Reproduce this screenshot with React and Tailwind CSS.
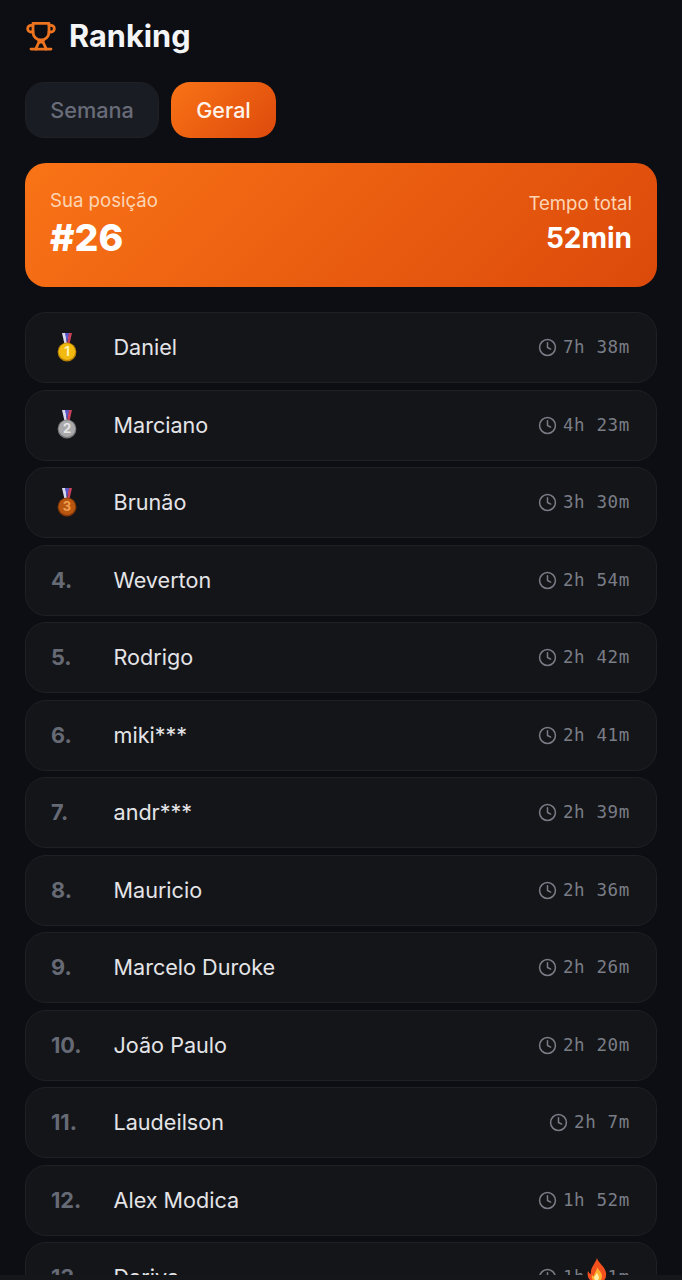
import React from 'react';
import { Clock } from 'lucide-react';

const rows = [
  { name: 'Daniel', time: '7h 38m', medal: 'gold' },
  { name: 'Marciano', time: '4h 23m', medal: 'silver' },
  { name: 'Brunão', time: '3h 30m', medal: 'bronze' },
  { name: 'Weverton', time: '2h 54m' },
  { name: 'Rodrigo', time: '2h 42m' },
  { name: 'miki***', time: '2h 41m' },
  { name: 'andr***', time: '2h 39m' },
  { name: 'Mauricio', time: '2h 36m' },
  { name: 'Marcelo Duroke', time: '2h 26m' },
  { name: 'João Paulo', time: '2h 20m' },
  { name: 'Laudeilson', time: '2h 7m' },
  { name: 'Alex Modica', time: '1h 52m' },
  { name: 'Dariva', time: '1h 41m' },
];

const medals = {
  gold: { fill: '#f2b90f', dark: '#b98206', text: '#fff3b0', label: '1' },
  silver: { fill: '#a9a9ab', dark: '#77777a', text: '#e6e6e6', label: '2' },
  bronze: { fill: '#b9560f', dark: '#82380a', text: '#f0a050', label: '3' },
};

function Medal({ type }) {
  const m = medals[type];
  return (
    <svg width="22" height="29" viewBox="0 0 22 29" className="ml-[4.5px]">
      <path d="M6 0h3.5L11 11 8.5 11z" fill="#d8d8ee" />
      <path d="M16 0h-3.5L11 11l2.5 0z" fill="#c9405a" />
      <path d="M9 0h4l-2 10z" fill="#5a58c8" />
      <circle cx="11" cy="19" r="9.4" fill={m.dark} />
      <circle cx="11" cy="18.6" r="8.3" fill={m.fill} />
      <text x="11" y="23.2" textAnchor="middle" fontSize="13" fontWeight="700" fill={m.text} fontFamily="Inter, sans-serif">{m.label}</text>
    </svg>
  );
}

function TrophyIcon() {
  return (
    <svg width="32" height="32" viewBox="0 0 24 24" fill="none" stroke="#ee7420" strokeWidth="2.1" strokeLinecap="round" strokeLinejoin="round">
      <path d="M6 9H4.5a2.5 2.5 0 0 1 0-5H6" />
      <path d="M18 9h1.5a2.5 2.5 0 0 0 0-5H18" />
      <path d="M6 2.5h12V9a6 6 0 0 1-12 0z" />
      <path d="M4.5 21.8h15" />
      <path d="M10.5 15.5v1L8 21.8" />
      <path d="M13.5 15.5v1l2.5 5.3" />
      <path d="M10.5 16.5l3 0" />
    </svg>
  );
}

function Row({ item, pos }) {
  return (
    <div className="flex h-[71px] shrink-0 items-center justify-between rounded-[21px] border border-[#1f2024] bg-[#141519] pl-[25px] pr-[26px]">
      <div className="flex items-center">
        <div className="w-[62.5px] text-[21.7px] font-bold text-[#666a75]">
          {item.medal ? <Medal type={item.medal} /> : `${pos}.`}
        </div>
        <span className="text-[21.6px] text-[#e4e4e7]">{item.name}</span>
      </div>
      <div className="flex items-center gap-[6px] text-[#7a7d86]">
        <Clock size={19} strokeWidth={1.9} />
        <span className="text-[17.5px] tracking-[0.65px] whitespace-pre font-['DejaVu_Sans_Mono',monospace]">{item.time}</span>
      </div>
    </div>
  );
}

export default function App() {
  return (
    <div className="relative h-[1280px] overflow-hidden bg-[#0d0e13] px-[25px] font-['Inter',sans-serif]">
      <div className="flex items-center gap-[12px] pt-[16px]">
        <TrophyIcon />
        <h1 className="text-[30.7px] leading-[40px] font-bold text-[#f4f5f7]">Ranking</h1>
      </div>

      <div className="mt-[26px] flex gap-[12px]">
        <div className="flex h-[56px] w-[134px] items-center justify-center rounded-[19px] border border-[#1f2026] bg-[#1a1c23] text-[21.7px] font-medium text-[#686c78]">Semana</div>
        <div className="flex h-[56px] w-[105px] items-center justify-center rounded-[19px] bg-[linear-gradient(135deg,#f97316,#dd4a0c)] text-[21.5px] font-medium text-[#fff3ea]">Geral</div>
      </div>

      <div className="mt-[25px] flex h-[124px] items-center justify-between rounded-[21px] bg-[linear-gradient(135deg,#f97316,#dc4a0b)] px-[25px]">
        <div>
          <div className="text-[18.6px] leading-[26px] text-[#fdd5b5]">Sua posição</div>
          <div className="text-[37.5px] leading-[50px] font-extrabold text-white">#26</div>
        </div>
        <div className="pb-[2px] text-right">
          <div className="text-[18.6px] leading-[26px] text-[#fdd5b5]">Tempo total</div>
          <div className="mt-[1px] text-[28px] leading-[42px] font-bold text-white">52min</div>
        </div>
      </div>

      <div className="mt-[25px] flex flex-col gap-[6.5px]">
        {rows.map((item, i) => (
          <Row key={item.name} item={item} pos={i + 1} />
        ))}
      </div>

      {/* barra inferior + foguinho por cima */}
      <div className="absolute inset-x-0 bottom-0 h-[5px] bg-[#15161a]" />
      <svg width="24" height="22" viewBox="0 0 24 22" className="absolute bottom-0 left-[585px]">
        <path d="M12 0c1 5 8 8 9 15 .5 4-1 7-2 7H5c-2-2-3-5-2-9 1 2 2 3 3 3C5 10 10 6 12 0z" fill="#f4511e" />
        <path d="M12 9c1 3 5 5 5 9 0 2-1 4-1 4H8s-2-2-1-5c1 1 2 1 2 1 0-3 3-5 3-9z" fill="#ffb02e" />
        <path d="M12 15c1 2 2 3 2 5l-1 2h-3l-1-2c0-2 2-3 3-5z" fill="#fff0a8" />
      </svg>
    </div>
  );
}
